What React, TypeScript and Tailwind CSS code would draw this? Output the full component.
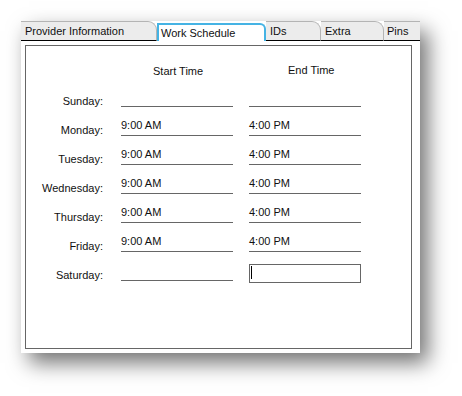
const days = [
  { day: "Sunday:", start: "", end: "" },
  { day: "Monday:", start: "9:00 AM", end: "4:00 PM" },
  { day: "Tuesday:", start: "9:00 AM", end: "4:00 PM" },
  { day: "Wednesday:", start: "9:00 AM", end: "4:00 PM" },
  { day: "Thursday:", start: "9:00 AM", end: "4:00 PM" },
  { day: "Friday:", start: "9:00 AM", end: "4:00 PM" },
  { day: "Saturday:", start: "", end: "" },
];

function Tab({ label, width }: { label: string; width: string }) {
  return (
    <div
      className={`${width} h-[20px] shrink-0 bg-[#ececec] border-t border-r border-[#b4b4b4] border-b-black rounded-tr-[9px] border-b pl-[4px] text-[11px] leading-[18px] text-[#101010] overflow-hidden whitespace-nowrap`}
    >
      {label}
    </div>
  );
}

function Field({ value }: { value: string }) {
  return (
    <div className="w-[112px] h-[19px] border-b border-[#666] pt-[2px] text-[11px] leading-[13px] text-[#111]">
      {value}
    </div>
  );
}

export default function App() {
  return (
    <div className="w-[462px] h-[396px] bg-white pt-[21px] pl-[21px] font-['Liberation_Sans',Arial,sans-serif]">
      <div className="w-[399px] h-[332px] bg-white flex flex-col shadow-[8px_10px_20px_rgba(0,0,0,0.55)]">
        <div className="flex h-[20px] items-end">
          <Tab label="Provider Information" width="w-[136px]" />
          <div className="w-[109px] h-[18px] shrink-0 bg-white border-t-2 border-l-2 border-r-2 border-[#45b3e4] rounded-tr-[6px] pl-[2px] text-[11px] leading-[17px] text-[#101010] whitespace-nowrap">
            Work Schedule
          </div>
          <Tab label="IDs" width="w-[55px]" />
          <Tab label="Extra" width="w-[63px]" />
          <div className="w-[36px] h-[20px] shrink-0 bg-[#ececec] border-t border-[#b4b4b4] border-b border-b-black pl-[3px] text-[11px] leading-[18px] text-[#101010] overflow-hidden whitespace-nowrap">
            Pins
          </div>
        </div>
        <div className="flex-1 pt-[4px] pl-[4px] pr-[8px] pb-[4px]">
          <div className="h-full border border-[#666] pt-[19px]">
            <div className="flex text-[11px] leading-[13px] text-[#111]">
              <div className="ml-[127px] w-[50px] whitespace-nowrap">Start Time</div>
              <div className="ml-[85px] whitespace-nowrap -mt-[1px]">End Time</div>
            </div>
            {days.map((d) => (
              <div key={d.day} className="flex items-end h-[29px]">
                <div className="w-[77px] text-right text-[11px] leading-[13px] text-[#111] mb-[-1px]">{d.day}</div>
                <div className="ml-[18px]">
                  <Field value={d.start} />
                </div>
                <div className="ml-[16px]">
                  {d.day === "Saturday:" ? (
                    <div className="w-[112px] h-[19px] border border-[#666] mb-[-2px] pl-[1px] pt-[1px]">
                      <div className="w-[1px] h-[13px] bg-black" />
                    </div>
                  ) : (
                    <Field value={d.end} />
                  )}
                </div>
              </div>
            ))}
          </div>
        </div>
      </div>
    </div>
  );
}
